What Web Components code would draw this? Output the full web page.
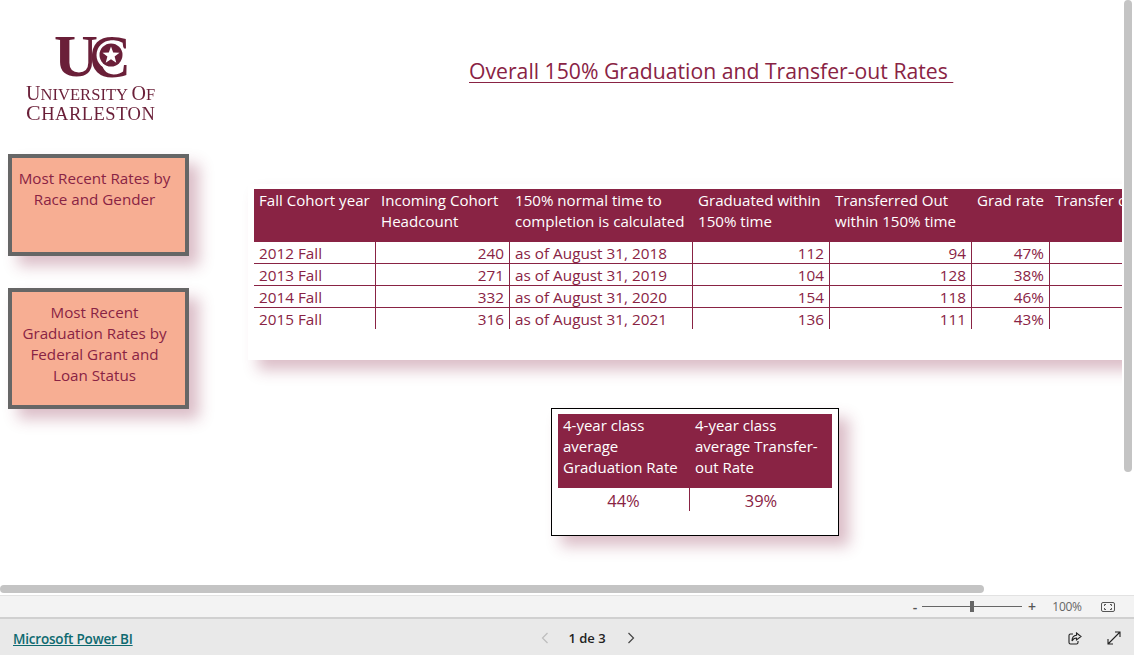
<!DOCTYPE html>
<html lang="en">
<head>
<meta charset="utf-8">
<title>Overall 150% Graduation and Transfer-out Rates</title>
<style>
  html, body { margin: 0; height: 100%; overflow: hidden; background: #fff; }
  body { font-family: "Open Sans", "Noto Sans", sans-serif; color: #892344; }
</style>
</head>
<body>
<report-app></report-app>

<script>
const MAROON = '#892344'
const SHADOW = '10px 10px 14px rgba(137, 35, 68, .3)'

class UcLogo extends HTMLElement {
  connectedCallback() {
    const shadow = this.attachShadow({ mode: 'open' })
    shadow.innerHTML = /*html*/`
      <style>
        :host { display: block; width: 134px; color: #6a1f38; font-family: "Liberation Serif", serif; filter: blur(.3px); }
        svg { display: block; margin: 0 0 -6px 28px; }
        .name { line-height: 18px; white-space: nowrap; }
        .one { font-size: 16.5px; letter-spacing: .05px; }
        .one b { font-size: 20px; font-weight: 400; }
        .two { font-size: 18.5px; letter-spacing: .5px; }
        .two b { font-size: 22px; font-weight: 400; }
      </style>
      <svg width="80" height="72" viewBox="0 0 80 72">
        <text x="0" y="58" font-family="Liberation Serif" font-weight="700" font-size="60" fill="#6a1f38" textLength="44" lengthAdjust="spacingAndGlyphs">U</text>
        <text x="35" y="58.5" font-family="Liberation Serif" font-weight="700" font-size="62" fill="#6a1f38" textLength="42" lengthAdjust="spacingAndGlyphs">C</text>
        <circle cx="57" cy="37" r="14.5" fill="#fff"/>
        <circle cx="57" cy="37" r="11.5" fill="#6a1f38"/>
        <path fill="#fff" d="M57 28.5l2.2 5.9 6.3.3-4.9 3.9 1.7 6.1-5.3-3.5-5.3 3.5 1.7-6.1-4.9-3.9 6.3-.3z"/>
      </svg>
      <div class="name one"><b>U</b>NIVERSITY <b>O</b>F</div>
      <div class="name two"><b>C</b>HARLESTON</div>
    `
  }
}
customElements.define('uc-logo', UcLogo)

class NavButton extends HTMLElement {
  connectedCallback() {
    const shadow = this.attachShadow({ mode: 'open' })
    shadow.innerHTML = /*html*/`
      <style>
        :host {
          display: block;
          box-sizing: border-box;
          width: 181px;
          padding: 10px 11px 0 3px;
          background: #f7ae93;
          border: 4px solid #666;
          box-shadow: ${SHADOW};
          font-size: 15.2px;
          line-height: 21px;
          text-align: center;
          color: ${MAROON};
        }
      </style>
      <slot></slot>
    `
  }
}
customElements.define('nav-button', NavButton)

class CohortTable extends HTMLElement {
  connectedCallback() {
    const heads = ['Fall Cohort year', 'Incoming Cohort Headcount', '150% normal time to completion is calculated',
      'Graduated within 150% time', 'Transferred Out within 150% time', 'Grad rate', 'Transfer out rate']
    const rows = [
      ['2012 Fall', '240', 'as of August 31, 2018', '112', '94', '47%', ''],
      ['2013 Fall', '271', 'as of August 31, 2019', '104', '128', '38%', ''],
      ['2014 Fall', '332', 'as of August 31, 2020', '154', '118', '46%', ''],
      ['2015 Fall', '316', 'as of August 31, 2021', '136', '111', '43%', ''],
    ]
    const textCols = [0, 2]
    const shadow = this.attachShadow({ mode: 'open' })
    shadow.innerHTML = /*html*/`
      <style>
        :host {
          display: block;
          box-sizing: border-box;
          width: 1000px;
          height: 176px;
          padding: 5px 6px;
          background: #fff;
          box-shadow: ${SHADOW};
          line-height: 21px;
        }
        .grid { display: grid; grid-template-columns: 122px 134px 183px 137px 142px 78px 140px; }
        .head { background: ${MAROON}; color: #fff; height: 53px; padding: 1px 5px 0; box-sizing: border-box; font-size: 15.1px; }
        .head.nowrap { white-space: nowrap; }
        .cell { box-sizing: border-box; height: 22px; padding: 1px 5px 0; border-right: 1px solid ${MAROON}; border-bottom: 1px solid ${MAROON}; white-space: nowrap; font-size: 15.3px; }
        .cell.num { text-align: right; }
        .cell.last-row { height: 21px; border-bottom: 0; }
        .cell.end { border-right: 0; }
      </style>
      <div class="grid">
        ${heads.map((h, i) => `<div class="head ${i === 0 || i > 4 ? 'nowrap' : ''}">${h}</div>`).join('')}
        ${rows.map((row, r) => row.map((v, i) =>
          `<div class="cell ${textCols.includes(i) ? '' : 'num'} ${r === rows.length - 1 ? 'last-row' : ''} ${i === row.length - 1 ? 'end' : ''}">${v}</div>`
        ).join('')).join('')}
      </div>
    `
  }
}
customElements.define('cohort-table', CohortTable)

class AverageCard extends HTMLElement {
  connectedCallback() {
    const shadow = this.attachShadow({ mode: 'open' })
    shadow.innerHTML = /*html*/`
      <style>
        :host {
          display: block;
          box-sizing: border-box;
          width: 288px;
          height: 128px;
          padding: 5px 6px;
          background: #fff;
          border: 1px solid #000;
          box-shadow: ${SHADOW};
          font-size: 15px;
          line-height: 21px;
        }
        .grid { display: grid; grid-template-columns: 132px 142px; }
        .head { box-sizing: border-box; height: 74px; padding: 1px 5px 0; background: ${MAROON}; color: #fff; }
        .val { box-sizing: border-box; height: 23px; padding-top: 2px; text-align: center; font-size: 16.5px; }
        .div { border-right: 1px solid ${MAROON}; }
      </style>
      <div class="grid">
        <div class="head">4-year class average Graduation Rate</div>
        <div class="head">4-year class average Transfer-out Rate</div>
        <div class="val div">44%</div>
        <div class="val">39%</div>
      </div>
    `
  }
}
customElements.define('average-card', AverageCard)

class ZoomBar extends HTMLElement {
  connectedCallback() {
    const shadow = this.attachShadow({ mode: 'open' })
    shadow.innerHTML = /*html*/`
      <style>
        :host {
          display: flex;
          align-items: center;
          justify-content: flex-end;
          box-sizing: border-box;
          height: 24px;
          padding-right: 19px;
          background: #f3f3f3;
          border-top: 1px solid #e2e2e2;
          border-bottom: 2px solid #d0d0d0;
          color: #666;
          font-size: 12px;
        }
        .sign { width: 8px; text-align: center; color: #555; font-size: 14px; line-height: 16px; font-weight: 600; }
        .track { position: relative; width: 100px; height: 1px; margin: 0 6px 0 3px; background: #666; }
        .thumb { position: absolute; left: 48px; top: -5px; width: 4px; height: 11px; background: #666; }
        .pct { width: 32px; margin-left: 15px; text-align: center; font-size: 12px; letter-spacing: -.3px; }
        svg { display: block; margin-left: 18px; }
      </style>
      <span class="sign">-</span>
      <div class="track"><div class="thumb"></div></div>
      <span class="sign">+</span>
      <span class="pct">100%</span>
      <svg width="14" height="10" viewBox="0 0 14 10" fill="none" stroke="#555">
        <rect x=".5" y=".5" width="13" height="9" rx="1.5"/>
        <path d="M3.5 4V2.5H5M9 2.5h1.5V4M10.5 6v1.5H9M5 7.5H3.5V6"/>
      </svg>
    `
  }
}
customElements.define('zoom-bar', ZoomBar)

class FooterBar extends HTMLElement {
  connectedCallback() {
    const shadow = this.attachShadow({ mode: 'open' })
    shadow.innerHTML = /*html*/`
      <style>
        :host {
          display: grid;
          grid-template-columns: 1fr auto 1fr;
          align-items: center;
          flex: 1;
          padding: 2px 13px 0;
          background: #e9e9e9;
          font-size: 13.5px;
        }
        a { color: #0e6a70; font-weight: 600; text-decoration: underline; letter-spacing: -.2px; padding-top: 1px; }
        .pager { display: flex; align-items: center; margin-left: 42px; color: #222; font-weight: 600; font-size: 13px; }
        .pager span { margin: 0 21px 0 19px; }
        .tools { display: flex; justify-content: flex-end; align-items: center; gap: 25px; }
        svg { display: block; }
      </style>
      <a href="#">Microsoft Power BI</a>
      <div class="pager">
        <svg width="8" height="12" viewBox="0 0 8 12" fill="none" stroke="#bdbdbd" stroke-width="1.2"><path d="M6.5 1L1.5 6l5 5"/></svg>
        <span>1 de 3</span>
        <svg width="8" height="12" viewBox="0 0 8 12" fill="none" stroke="#444" stroke-width="1.2"><path d="M1.5 1l5 5-5 5"/></svg>
      </div>
      <div class="tools">
        <svg width="14" height="13" viewBox="0 0 14 13" fill="none" stroke="#222" stroke-width="1.1">
          <path d="M5 2H2.5A1.5 1.5 0 0 0 1 3.5v7A1.5 1.5 0 0 0 2.5 12h6A1.5 1.5 0 0 0 10 10.5V9"/>
          <path d="M8.5 1L13 4.5 8.5 8V6C6.5 6 5 7 4 9c0-3.5 1.500-5.500 4.500-5.800z"/>
        </svg>
        <svg width="14" height="14" viewBox="0 0 14 14" fill="none" stroke="#222" stroke-width="1.1">
          <path d="M1 13L13 1M8 1h5v5M1 8v5h5"/>
        </svg>
      </div>
    `
  }
}
customElements.define('footer-bar', FooterBar)

class ReportApp extends HTMLElement {
  connectedCallback() {
    const shadow = this.attachShadow({ mode: 'open' })
    shadow.innerHTML = /*html*/`
      <style>
        :host { display: flex; flex-direction: column; height: 100vh; }
        .report { position: relative; height: 595px; overflow: hidden; }
        .canvas { position: absolute; left: 0; top: 0; width: 1122px; height: 585px; overflow: hidden; }
        .canvas > * { position: absolute; }
        uc-logo { left: 26px; top: 18px; }
        h1 {
          left: 469px; top: 54px; margin: 0;
          font-size: 21.2px; line-height: 34px; font-weight: 400;
          text-decoration: underline; text-decoration-thickness: 1px; text-underline-offset: 3px;
          white-space: pre; color: ${MAROON};
        }
        .btn1 { left: 8px; top: 154px; height: 102px; }
        .btn2 { left: 8px; top: 288px; height: 121px; }
        cohort-table { left: 248px; top: 184px; }
        average-card { left: 551px; top: 408px; }
        .hbar, .vbar { position: absolute; background: #c4c4c4; border-radius: 4px; }
        .hbar { left: 0; top: 585px; width: 984px; height: 8px; }
        .vbar { left: 1124px; top: 0; width: 8px; height: 472px; }
      </style>
      <div class="report">
        <div class="canvas">
          <uc-logo></uc-logo>
          <h1>Overall 150% Graduation and Transfer-out Rates </h1>
          <nav-button class="btn1">Most Recent Rates by Race and Gender</nav-button>
          <nav-button class="btn2">Most Recent Graduation Rates by Federal Grant and Loan Status</nav-button>
          <cohort-table></cohort-table>
          <average-card></average-card>
        </div>
        <div class="hbar"></div>
        <div class="vbar"></div>
      </div>
      <zoom-bar></zoom-bar>
      <footer-bar></footer-bar>
    `
  }
}
customElements.define('report-app', ReportApp)
</script>
</body>
</html>
